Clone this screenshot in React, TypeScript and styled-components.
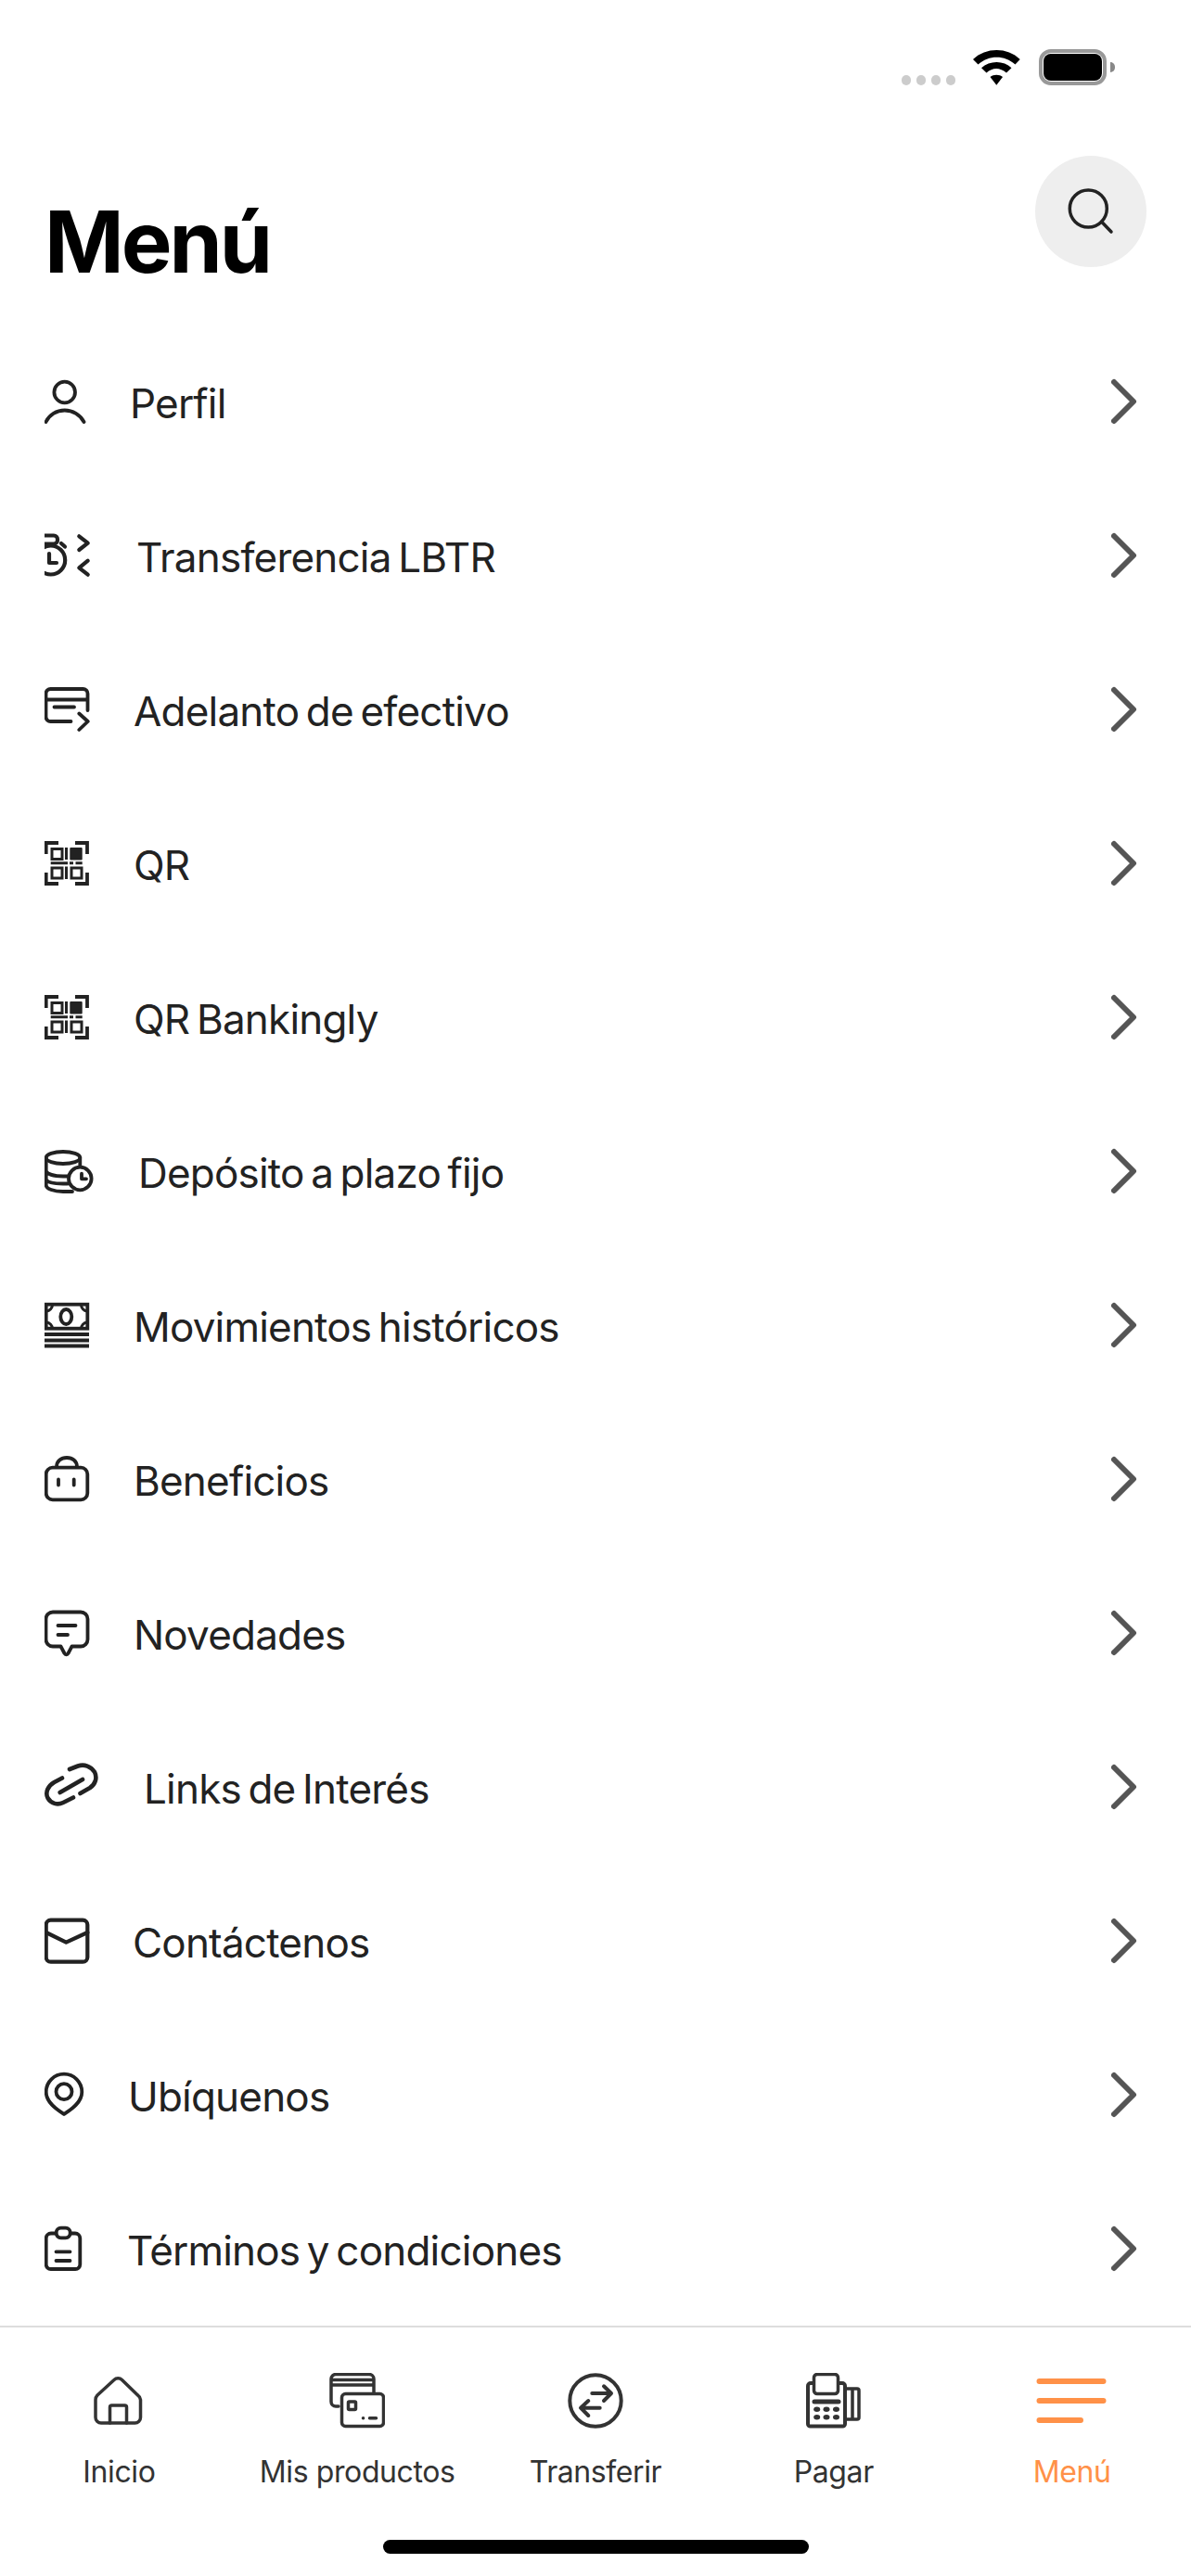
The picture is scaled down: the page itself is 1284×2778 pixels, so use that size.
import React from "react";
import styled, { createGlobalStyle } from "styled-components";

const Global = createGlobalStyle`
  html, body { margin: 0; padding: 0; background: #fff; }
  body { font-family: Inter, "Liberation Sans", sans-serif; }
`;

const Page = styled.div`
  width: 1284px;
  height: 2778px;
  display: flex;
  flex-direction: column;
  overflow: hidden;
  background: #fff;
`;

const StatusBar = styled.div`
  height: 39px;
  padding: 53px 91px 0 0;
  display: flex;
  justify-content: flex-end;
  align-items: flex-start;
`;
const Dots = styled.div`
  display: flex;
  gap: 6px;
  margin: 28px 19px 0 0;
`;
const Dot = styled.span`
  width: 10px;
  height: 11px;
  border-radius: 5px;
  background: #ccc;
`;
const Wifi = styled.svg`
  width: 51px;
  height: 38px;
  margin: 1px 20px 0 0;
`;
const Battery = styled.div`
  width: 73px;
  height: 39px;
  box-sizing: border-box;
  border: 4px solid #999;
  border-radius: 13px;
  background: #fff;
  padding: 1px;
  display: flex;
  position: relative;
  &::before {
    content: "";
    flex: 1;
    background: #000;
    border-radius: 8px;
  }
  &::after {
    content: "";
    position: absolute;
    right: -13px;
    top: 10px;
    width: 5px;
    height: 11px;
    background: #888;
    border-radius: 0 6px 6px 0;
  }
`;

const Header = styled.header`
  height: 183px;
  margin-top: 76px;
  padding: 0 48px;
  display: flex;
  justify-content: space-between;
  align-items: flex-start;
`;
const Title = styled.h1`
  margin: 47px 0 0;
  font: 700 92px/1 "Inter", "Liberation Sans", sans-serif;
  letter-spacing: -3px;
  color: #000;
`;
const SearchButton = styled.button`
  width: 120px;
  height: 120px;
  padding: 0;
  border: 0;
  border-radius: 50%;
  background: #eee;
  display: block;
  svg { display: block; }
`;

const List = styled.ul`
  flex: 1;
  margin: 0;
  padding: 0;
  list-style: none;
`;
const Row = styled.li`
  height: 166px;
  padding: 0 54px 0 48px;
  display: flex;
  align-items: center;
`;
const IconSlot = styled.span<{ $w: number }>`
  width: ${(p) => p.$w}px;
  flex: none;
  display: flex;
  align-items: center;
`;
const RowIcon = styled.svg`
  width: 60px;
  height: 60px;
  display: block;
  fill: none;
  stroke: #222;
  stroke-width: 3.8;
  stroke-linecap: round;
  stroke-linejoin: round;
`;
const RowLabel = styled.span`
  flex: 1;
  padding-top: 3px;
  font-size: 44px;
  font-weight: 400;
  letter-spacing: -0.8px;
  word-spacing: -4px;
  color: #222;
`;
const Chevron = styled.svg`
  width: 32px;
  height: 52px;
  flex: none;
  fill: none;
  stroke: #555;
  stroke-width: 6;
  stroke-linecap: round;
  stroke-linejoin: round;
`;

const Nav = styled.nav`
  height: 269px;
  border-top: 2px solid #ddd;
  box-sizing: content-box;
  display: flex;
  flex-direction: column;
`;
const Tabs = styled.div`
  display: grid;
  grid-template-columns: repeat(5, 1fr);
  padding-top: 49px;
`;
const Tab = styled.div<{ $active?: boolean }>`
  display: flex;
  flex-direction: column;
  align-items: center;
  color: ${(p) => (p.$active ? "#ff9148" : "#333")};
`;
const TabIcon = styled.svg`
  height: 60px;
  display: block;
  fill: none;
  stroke: currentColor;
  stroke-width: 3.5;
  stroke-linecap: round;
  stroke-linejoin: round;
`;
const TabLabel = styled.span`
  margin-top: 27px;
  font-size: 32px;
  line-height: 40px;
  letter-spacing: -0.4px;
  white-space: nowrap;
`;
const HomeIndicator = styled.div`
  width: 459px;
  height: 15px;
  margin: auto auto 24px;
  border-radius: 8px;
  background: #000;
`;

const solid = { fill: "#222", stroke: "none" };

const icons: Record<string, React.ReactNode> = {
  perfil: (
    <>
      <circle cx="21.7" cy="20" r="11.3" />
      <path d="M1.5 52C5 44.5 13 39.5 21.7 39.5S38.5 44.5 42.5 52" />
    </>
  ),
  lbtr: (
    <g strokeWidth="4.2">
      <circle cx="6.7" cy="35" r="15.5" />
      <rect x="-6" y="8.5" width="20" height="9" rx="4" />
      <path d="M18 17l4 3.5M5 28v10h8M37.3 9.3l9.4 7.4-9.4 7.3M46.7 35.7l-9.4 7.6 9.4 7.4" />
    </g>
  ),
  adelanto: (
    <path d="M28.5 43H6.5a5 5 0 0 1-5-5V13a5 5 0 0 1 5-5h35a5 5 0 0 1 5 5v18M1.5 19.5H46.5M10.5 27.5H32M37.3 34.5L46.7 43l-9.4 9" />
  ),
  qr: (
    <>
      <g strokeLinecap="butt" strokeLinejoin="miter">
        <path d="M1.7 20V8H15M33 8H46V20M1.7 40V52H15M33 52H46V40" />
        <g strokeWidth="3">
          <rect x="8" y="14.5" width="11" height="11" />
          <rect x="8" y="35" width="11" height="11" />
          <rect x="29" y="35" width="11" height="11" />
          <path d="M23.5 13V26M23.5 33.5V47M6.7 29.7H25M27 29.7H31M33.5 29.7H40.7" />
        </g>
      </g>
      <rect x="27.3" y="13" width="13.4" height="13.4" rx="1" style={solid} />
    </>
  ),
  deposito: (
    <>
      <ellipse cx="20" cy="15.5" rx="18.3" ry="6.5" />
      <path d="M1.7 15.5V45C1.7 49 10 52 20 52H30M38.3 15.5V25M1.7 30C3 33 10 35.5 20 35.5H25M1.7 39C3 42 10 43.5 20 43.5H25" />
      <circle cx="38.3" cy="38" r="12.3" style={{ fill: "#fff" }} />
      <path d="M40 32.7V38.3H45" />
    </>
  ),
  movimientos: (
    <g strokeLinecap="butt">
      <rect x="1.7" y="7.7" width="44.6" height="26" strokeLinejoin="miter" />
      <ellipse cx="23.3" cy="21" rx="6" ry="8" />
      <path d="M2 15A7 7 0 0 0 8.5 8M46 15A7 7 0 0 1 39.5 8M2 27A7 7 0 0 1 8.5 34M46 27A7 7 0 0 0 39.5 34" strokeWidth="3" />
      <path d="M0 40H48M0 46.5H48M0 52.5H48" />
    </g>
  ),
  beneficios: (
    <>
      <rect x="1.7" y="17.7" width="44.6" height="34.6" rx="7" />
      <path d="M13 17C13 10.5 18 7 24 7S35 10.5 35 17M15 30.5V36.5M31.7 30.5V36.5" />
    </>
  ),
  novedades: (
    <path d="M9 7.5H39a7.5 7.5 0 0 1 7.5 7.5V37a7.5 7.5 0 0 1-7.5 7.5H29.5L25.5 52a2.2 2.2 0 0 1-4 0L17.5 44.5H9A7.5 7.5 0 0 1 1.5 37V15A7.5 7.5 0 0 1 9 7.5zM14.5 22H33.5M14.5 32H25" />
  ),
  links: (
    <path
      strokeWidth="4.6"
      d="M19 20.5L10.500 25C3.500 29 0.500 36 3.500 42C7 48 14 50 20 47L31 41.500M16.700 36L41 22M27 11L36 7.500C43 5 50 8 54 14C57 20 55 27 49 31L38.500 37"
    />
  ),
  contacto: (
    <g strokeWidth="4.2">
      <rect x="1.7" y="7.700" width="44.6" height="45" rx="5" />
      <path d="M1.700 21L23.300 31.700L46.300 21" />
    </g>
  ),
  ubicanos: (
    <>
      <path d="M21 51C17 48 1.700 40 1.700 27a19.300 19.300 0 0 1 38.600 0C40.300 40 25 48 21 51z" />
      <circle cx="21" cy="26.700" r="8.500" />
    </>
  ),
  terminos: (
    <>
      <path d="M12 13.500H7A5.300 5.300 0 0 0 1.700 18.800V47A5 5 0 0 0 6.700 52H33.300A5 5 0 0 0 38.300 47V18.800A5.300 5.300 0 0 0 33 13.500H28" />
      <rect x="12.700" y="7.700" width="15" height="10.600" rx="5" />
      <path d="M12.500 33.300H27.500M12.500 43H27.500" />
    </>
  ),
};

const rows: { key: string; label: string; w: number }[] = [
  { key: "perfil", label: "Perfil", w: 92 },
  { key: "lbtr", label: "Transferencia LBTR", w: 99 },
  { key: "adelanto", label: "Adelanto de efectivo", w: 96 },
  { key: "qr", label: "QR", w: 96 },
  { key: "qr", label: "QR Bankingly", w: 96 },
  { key: "deposito", label: "Depósito a plazo fijo", w: 101 },
  { key: "movimientos", label: "Movimientos históricos", w: 96 },
  { key: "beneficios", label: "Beneficios", w: 96 },
  { key: "novedades", label: "Novedades", w: 96 },
  { key: "links", label: "Links de Interés", w: 107 },
  { key: "contacto", label: "Contáctenos", w: 95 },
  { key: "ubicanos", label: "Ubíquenos", w: 90 },
  { key: "terminos", label: "Términos y condiciones", w: 89 },
];

export default function App() {
  return (
    <Page>
      <Global />
      <StatusBar>
        <Dots>
          <Dot />
          <Dot />
          <Dot />
          <Dot />
        </Dots>
        <Wifi viewBox="0 0 51 38">
          <path d="M0 10C14-3.300 37-3.300 50.700 10L45.500 15.500C34 5 17 5 5.500 15.500Z" />
          <path d="M9 19.300C18 11 33 11 41.500 19.300L36 24.500C29 18.500 21 18.500 14.500 24.500Z" />
          <path d="M18.500 29C22 26 28.500 26 32 29L25.300 37.700Z" />
        </Wifi>
        <Battery />
      </StatusBar>
      <Header>
        <Title>Menú</Title>
        <SearchButton aria-label="Buscar">
          <svg width="120" height="120" viewBox="0 0 120 120" fill="none" stroke="#222" strokeWidth="3.5" strokeLinecap="round">
            <circle cx="57.300" cy="57" r="20" />
            <path d="M71.500 71L82 82" />
          </svg>
        </SearchButton>
      </Header>
      <List>
        {rows.map((r) => (
          <Row key={r.label}>
            <IconSlot $w={r.w}>
              <RowIcon viewBox="0 0 60 60">{icons[r.key]}</RowIcon>
            </IconSlot>
            <RowLabel>{r.label}</RowLabel>
            <Chevron viewBox="0 0 32 52">
              <path d="M3 5L24 26L3 47" />
            </Chevron>
          </Row>
        ))}
      </List>
      <Nav>
        <Tabs>
          <Tab>
            <TabIcon width="60" viewBox="0 0 60 60">
              <path d="M25 7.500a6 6 0 0 1 8.500 0L50.500 24a7 7 0 0 1 3 5V48a6 6 0 0 1-6 6H11a6 6 0 0 1-6-6V29a7 7 0 0 1 2-5Z" />
              <path d="M20.500 54V37a2 2 0 0 1 2-2H36.500a2 2 0 0 1 2 2V54" />
            </TabIcon>
            <TabLabel>Inicio</TabLabel>
          </Tab>
          <Tab>
            <TabIcon width="60" viewBox="0 0 60 60">
              <path d="M10 36H7A5 5 0 0 1 2 31V6.500A5 5 0 0 1 7 1.500H43A5 5 0 0 1 48 6.500V21M2 7.500H48M2 13H48" />
              <rect x="13.500" y="22.500" width="45" height="35" rx="4" />
              <rect x="20.500" y="31" width="8" height="8.500" rx="1" />
              <path d="M36.500 48.700H36.600M43.500 48.700H50.500" strokeWidth="3.500" />
            </TabIcon>
            <TabLabel>Mis productos</TabLabel>
          </Tab>
          <Tab>
            <TabIcon width="60" viewBox="0 0 60 60" strokeWidth="4">
              <circle cx="30" cy="30" r="27.700" strokeWidth="4" />
              <path d="M26.300 22H46M39 14.300L47 22L39 30M34.700 37.700H14.700M22.300 30L14 37.700L22.300 46" strokeWidth="4" />
            </TabIcon>
            <TabLabel>Transferir</TabLabel>
          </Tab>
          <Tab>
            <TabIcon width="60" viewBox="0 0 60 60">
              <path d="M7 11H5A3 3 0 0 0 2 14V55A2.500 2.500 0 0 0 4.500 57.500H39.500A2.500 2.500 0 0 0 42 55V14A3 3 0 0 0 39 11H36" strokeWidth="4" />
              <rect x="8.500" y="1.500" width="26" height="21" rx="3.500" strokeWidth="3.500" />
              <path d="M43 17H55A2 2 0 0 1 57 19V48A2 2 0 0 1 55 50H43M50 17V50" strokeWidth="3.500" />
              <path d="M9 31H35" strokeWidth="5" />
              <g fill="currentColor" stroke="none">
                <ellipse cx="11.700" cy="39.300" rx="3.500" ry="2.700" />
                <ellipse cx="22" cy="39.300" rx="3.500" ry="2.700" />
                <ellipse cx="32.500" cy="39.300" rx="3.500" ry="2.700" />
                <ellipse cx="11.700" cy="47.700" rx="3.500" ry="2.700" />
                <ellipse cx="22" cy="47.700" rx="3.500" ry="2.700" />
                <ellipse cx="32.500" cy="47.700" rx="3.500" ry="2.700" />
              </g>
            </TabIcon>
            <TabLabel>Pagar</TabLabel>
          </Tab>
          <Tab $active>
            <TabIcon width="80" viewBox="0 0 80 60" strokeWidth="6">
              <path d="M4.500 9H73.500M4.500 30H73.500M4.500 51H49" strokeWidth="6" />
            </TabIcon>
            <TabLabel>Menú</TabLabel>
          </Tab>
        </Tabs>
        <HomeIndicator />
      </Nav>
    </Page>
  );
}
